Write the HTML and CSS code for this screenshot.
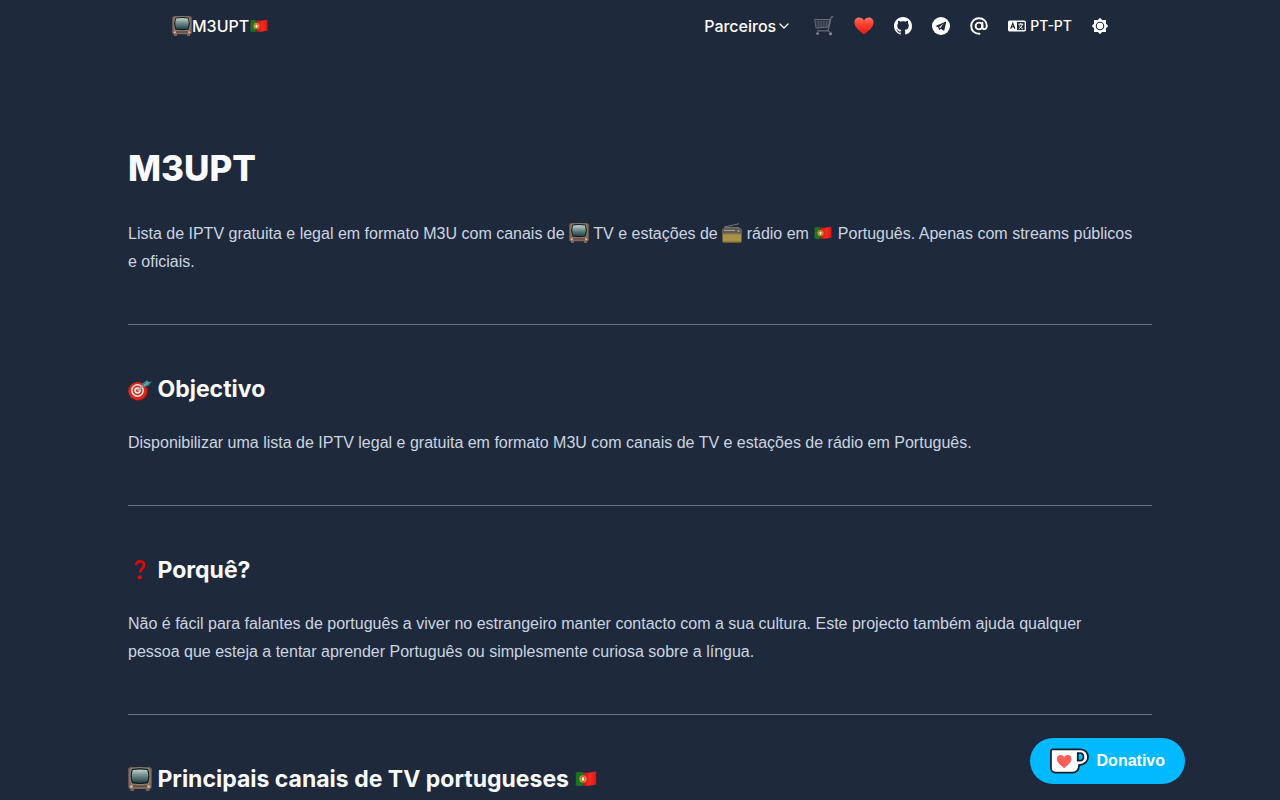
FILE: index.html
```html
<!DOCTYPE html>
<html lang="pt-PT">
<head>
<meta charset="utf-8">
<meta name="viewport" content="width=device-width, initial-scale=1">
<title>M3UPT</title>
<link rel="stylesheet" href="styles.css">
</head>
<body>
<svg class="sprite" aria-hidden="true">
  <defs>
    <linearGradient id="screen" x1="0" y1="0" x2="0" y2="1">
      <stop offset="0" stop-color="#c3d3d1"/><stop offset=".45" stop-color="#6f8c8b"/><stop offset="1" stop-color="#213f42"/>
    </linearGradient>
    <linearGradient id="heart-fill" x1="0" y1="0" x2="0" y2="1">
      <stop offset="0" stop-color="#ff7566"/><stop offset=".4" stop-color="#fb3f2d"/><stop offset="1" stop-color="#d71c14"/>
    </linearGradient>
    <linearGradient id="flag-red" x1="0" y1="0" x2="1" y2="0">
      <stop offset="0" stop-color="#c9120f"/><stop offset=".55" stop-color="#fb2a25"/><stop offset="1" stop-color="#d81313"/>
    </linearGradient>
  </defs>
  <symbol id="tv" viewBox="0 0 20 20">
    <path d="M2 17.500h3v2.500H2zM15 17.500h3v2.500h-3z" fill="#756459"/>
    <rect x=".3" y=".3" width="19.400" height="18" rx="1.500" fill="#836758"/>
    <path d="M3 1.200Q10-.2 17 1.200q2.600 6.300 0 12.800-7 1.500-14 0Q.4 7.500 3 1.200z" fill="#10181b" stroke="#b3aaa0" stroke-width=".6"/>
    <path d="M4 2.600q6-1.200 12 0 1.800 4.900 0 10-6 1.300-12 0-1.800-5.100 0-10z" fill="url(#screen)"/>
    <path d="M4 16h12" stroke="#5a463b" stroke-width="1"/>
    <circle cx="2.800" cy="16.300" r="1.100" fill="#cec1b0"/><circle cx="17.200" cy="16.300" r="1.100" fill="#cec1b0"/>
  </symbol>
  <symbol id="flag" viewBox="0 0 20 20">
    <path d="M1.500 4.500q3-.8 6 0v11q-3 .8-6 0z" fill="#187622"/>
    <path d="M7.500 4.500q3 .7 6 0t5-.8v11q-2 .1-5 .8t-6 0z" fill="url(#flag-red)"/>
    <circle cx="7.500" cy="10" r="2.900" fill="#e3bd31" stroke="#99852a" stroke-width=".5"/>
    <path d="M6 8.200h3v2q0 1.600-1.500 2Q6 11.800 6 10.200z" fill="#eee" stroke="#db2d22" stroke-width=".8"/>
  </symbol>
  <symbol id="radio" viewBox="0 0 20 20">
    <path d="M2 4 17 .8" stroke="#8b8b86" stroke-width=".8"/>
    <path d="M3 6V4.500h14V6" fill="none" stroke="#74736d"/>
    <rect x=".5" y="5.500" width="19" height="14" rx="1" fill="#aa9149"/>
    <path d="M.5 6.500q0-1 1-1h17q1 0 1 1v4H.5z" fill="#5d5b56"/>
    <path d="M2 7.500h11" stroke="#b7b5ad" stroke-width=".8"/>
    <circle cx="16.500" cy="8" r="1.100" fill="#a49b83"/>
    <path d="M1 11h18M1 18.800h18" stroke="#7d6c36" stroke-width=".8"/>
  </symbol>
  <symbol id="cart" viewBox="0 0 20 20">
    <g fill="none" stroke="#696c72" stroke-linecap="round">
      <path d="M19 .8h-1.700L14 14.800H3.500" stroke-width="1.200"/>
      <path d="M1 3.500h15l-1.700 7.500L2.500 12z" stroke-width="1"/>
      <path d="M4 3.500 4.500 12M7 3.500v8.300M10 3.500l-.3 8M13 3.500l-.8 7.500M1.500 6h14.200M1.800 8h13.400M2.200 10h12.600" stroke-width=".6"/>
      <path d="M14 14.800l3 1.700" stroke-width="1"/>
    </g>
    <circle cx="3.500" cy="17.500" r="1.300" fill="#8b8e93"/><circle cx="16.500" cy="17.800" r="1.500" fill="#8b8e93"/>
  </symbol>
  <symbol id="heart" viewBox="0 0 20 20">
    <path d="M10 18.800C6 15.300.4 11.500.4 6.600.4 3.500 2.600 1.500 5.200 1.500c2.100 0 3.900 1.200 4.800 3.200.9-2 2.700-3.200 4.800-3.200 2.600 0 4.800 2 4.800 5.100 0 4.900-5.600 8.700-9.600 12.200z" fill="url(#heart-fill)"/>
  </symbol>
  <symbol id="target" viewBox="0 0 24 24">
    <ellipse cx="10.500" cy="14.500" rx="9.800" ry="9.300" fill="#9b1411"/>
    <ellipse cx="9.500" cy="14" rx="9.300" ry="9" fill="#d92720"/>
    <circle cx="9.500" cy="13.500" r="6.500" fill="#eee5df"/><circle cx="9.500" cy="13.500" r="4.900" fill="#d62d25"/>
    <circle cx="9.500" cy="13.500" r="3.300" fill="#f2e7e0"/><circle cx="9.500" cy="13.500" r="1.600" fill="#d62d25"/>
    <path d="m9.500 13.500 7-5.500" stroke="#a7aaa5" stroke-width="1.600"/>
    <path d="m14.500 6.500 5-3.800.5 2.300L24 4.500 20.500 8.500l-5.500 2z" fill="#3d8899"/>
    <path d="m16 8.500 5-3.500" stroke="#77bac5"/>
  </symbol>
  <symbol id="question" viewBox="0 0 24 24">
    <path d="M8 7c.7-2.700 2.500-3.900 4.700-3.600 2.700.3 3.800 2.300 3.200 4.500-.7 2.600-3.400 3.200-3.700 6.600" fill="none" stroke="#dd0a0a" stroke-width="2.800"/>
    <circle cx="11.900" cy="19.300" r="2.100" fill="#dd0a0a"/>
  </symbol>
</svg>

<header class="navbar">
  <a class="brand" href="#"><svg class="emoji"><use href="#tv"/></svg>M3UPT<svg class="emoji"><use href="#flag"/></svg></a>
  <nav class="menu" aria-label="Principal">
    <button class="dropdown" type="button">Parceiros
      <svg class="chevron" viewBox="0 0 12 12"><path d="m2 4 4 4 4-4" fill="none" stroke="currentColor" stroke-width="1.300" stroke-linecap="round" stroke-linejoin="round"/></svg>
    </button>
    <a href="#" aria-label="Loja"><svg class="emoji"><use href="#cart"/></svg></a>
    <a href="#" aria-label="Apoiar"><svg class="emoji"><use href="#heart"/></svg></a>
    <a href="#" aria-label="GitHub"><svg class="icon" viewBox="0 0 16 16" fill="currentColor"><path d="M8 0C3.580 0 0 3.580 0 8c0 3.540 2.290 6.530 5.470 7.590.4.070.55-.17.55-.38 0-.19-.01-.82-.01-1.490-2.010.37-2.530-.49-2.690-.94-.09-.23-.48-.94-.82-1.130-.28-.15-.68-.52-.01-.53.63-.01 1.080.58 1.230.82.72 1.210 1.870.87 2.330.66.07-.52.28-.87.51-1.070-1.780-.2-3.640-.89-3.640-3.950 0-.87.31-1.590.82-2.150-.08-.2-.36-1.020.08-2.120 0 0 .67-.21 2.200.82.64-.18 1.320-.27 2-.27s1.360.09 2 .27c1.530-1.040 2.200-.82 2.200-.82.44 1.100.16 1.920.08 2.120.51.56.82 1.270.82 2.150 0 3.070-1.870 3.750-3.650 3.950.29.25.54.73.54 1.480 0 1.070-.01 1.930-.01 2.200 0 .21.15.46.55.38A8.010 8.010 0 0 0 16 8c0-4.420-3.580-8-8-8z"/></svg></a>
    <a href="#" aria-label="Telegram"><svg class="icon" viewBox="0 0 16 16"><circle cx="8" cy="8" r="8" fill="currentColor"/><path d="M3 7.900 12 4.200q.6-.1.500.6L11 11.800q-.3.700-.9.300L7.800 10.400 6.700 11.500q-.4.300-.5-.2L5.500 9z" class="cutout"/><path d="m6.200 9.200 4.400-3.700-3.300 4.300" fill="currentColor"/></svg></a>
    <a href="#" aria-label="E-mail"><svg class="icon" viewBox="0 0 18 18" fill="none" stroke="currentColor" stroke-width="1.900" stroke-linecap="round"><path d="M9.500 16.800C4.600 17 1.200 13.500 1.200 9S4.600 1.200 9 1.200 16.800 4.500 16.800 8.600c0 2.300-1 3.500-2.400 3.500-1.200 0-2-.8-2-2.200V5.700"/><circle cx="9" cy="9" r="3.400"/></svg></a>
    <button class="language" type="button" aria-label="Idioma PT-PT">
      <svg class="icon" viewBox="0 0 20 16"><rect y="2" width="20" height="12" rx="1.800" fill="currentColor"/><path d="M10 3.500h8.500v9H10z" class="cutout"/><path d="m3 11 2.300-6L7.600 11M4 9h2.800" class="cutline"/><path d="M11.500 6h5.500M14.200 4.500V6M12 11.200q3.500-1.600 4-5M12.700 7.500q1 2.600 3.800 3.700" fill="none" stroke="currentColor" stroke-width="1.100"/></svg>PT-PT
    </button>
    <button type="button" aria-label="Mudar tema"><svg class="icon sun" viewBox="0 0 18 18"><path d="m9 .8 2.400 2.400 3.600-.2-.2 3.400L17.200 9l-2.400 2.600.2 3.400-3.600-.2L9 17.200l-2.400-2.400-3.600.2.200-3.400L.8 9l2.400-2.600L3 3l3.600.2z" fill="currentColor" stroke="currentColor" stroke-width="1.400"/><circle cx="9" cy="9" r="4.200" class="cutline"/></svg></button>
  </nav>
</header>

<main class="prose">
  <h1>M3UPT</h1>
  <p>Lista de IPTV gratuita e legal em formato M3U com canais de <svg class="emoji"><use href="#tv"/></svg> TV e estações de <svg class="emoji"><use href="#radio"/></svg> rádio em <svg class="emoji"><use href="#flag"/></svg> Português. Apenas com streams públicos <br>e oficiais.</p>
  <hr>
  <h2><svg class="emoji"><use href="#target"/></svg> Objectivo</h2>
  <p>Disponibilizar uma lista de IPTV legal e gratuita em formato M3U com canais de TV e estações de rádio em Português.</p>
  <hr>
  <h2><svg class="emoji"><use href="#question"/></svg> Porquê?</h2>
  <p>Não é fácil para falantes de português a viver no estrangeiro manter contacto com a sua cultura. Este projecto também ajuda qualquer <br>pessoa que esteja a tentar aprender Português ou simplesmente curiosa sobre a língua.</p>
  <hr>
  <h2><svg class="emoji"><use href="#tv"/></svg> Principais canais de TV portugueses <svg class="emoji"><use href="#flag"/></svg></h2>
</main>

<a class="donate" href="#">
  <svg class="cup" viewBox="0 0 40 28"><path d="M27 2h4.500C36 2 39 5.500 39 9.800S35.500 18 31 18h-1c-.5 5-2.500 8-6.500 8H6c-3 0-5-2-5-5V4c0-1.500.7-2 2-2z" fill="#fff" stroke="#15202b" stroke-width="1.800"/><path d="M28.500 6H31c2 0 3.300 1.700 3.300 3.800S33 13.500 31 13.500h-2.500z" fill="#00b9fe" stroke="#15202b" stroke-width="1.800"/><path d="M14.500 21.500C11 18.500 7 15.800 7 11.800c0-4.300 5.300-5.200 7.500-1.800 2.200-3.400 7.500-2.500 7.500 1.800 0 4-4 6.700-7.500 9.700z" fill="#ff5e5b"/></svg>
  Donativo
</a>
</body>
</html>
```

FILE: styles.css
```css
* { box-sizing: border-box; }

body {
  margin: 0;
  height: 100vh;
  overflow: hidden;
  background: #1e293b;
  color: #cbd5e1;
  font-family: "Liberation Sans", Arial, sans-serif;
  font-size: 16px;
  line-height: 28px;
}

.sprite { position: absolute; width: 0; height: 0; }

a { color: inherit; text-decoration: none; }

button {
  padding: 0;
  border: 0;
  background: none;
  color: inherit;
  font: inherit;
  cursor: pointer;
}

.emoji { width: 20px; height: 20px; vertical-align: -4px; }

.navbar {
  display: flex;
  align-items: center;
  justify-content: space-between;
  max-width: 936px;
  height: 52px;
  margin: 0 auto;
  color: #fff;
  font-family: Inter, sans-serif;
  font-weight: 500;
}

.brand, .menu, .menu a, .menu button { display: flex; align-items: center; }
.menu { gap: 20px; }
.dropdown { gap: 2px; margin-right: 4px; }
.chevron { width: 12px; height: 12px; }
.icon { display: block; width: 18px; height: 18px; }
.menu .language { gap: 4px; font-size: 14px; font-weight: 500; }
.menu .sun { width: 16px; height: 16px; }
.cutout { fill: #1e293b; }
.cutline { fill: none; stroke: #1e293b; stroke-width: 1.3; }

.prose { max-width: 1024px; margin: 96px auto 0; }

h1, h2 {
  color: #f8fafc;
  font-family: Inter, sans-serif;
}

h1 {
  margin: 0 0 32px;
  font-size: 35px;
  font-weight: 800;
  line-height: 40px;
}

h2 {
  margin: 0 0 24px;
  font-size: 23px;
  font-weight: 700;
  line-height: 32px;
}

h2 .emoji { width: 24px; height: 24px; }
.prose p { margin: 0; }
hr { height: 1px; margin: 48px 0; border: 0; background: #64748b; }

.donate {
  position: fixed;
  right: 95px;
  bottom: 16px;
  display: flex;
  align-items: center;
  gap: 8px;
  height: 46px;
  padding: 0 20px;
  border-radius: 23px;
  background: #00b9fe;
  color: #fff;
  font-weight: 700;
}

.cup { width: 39px; height: 28px; }
```
